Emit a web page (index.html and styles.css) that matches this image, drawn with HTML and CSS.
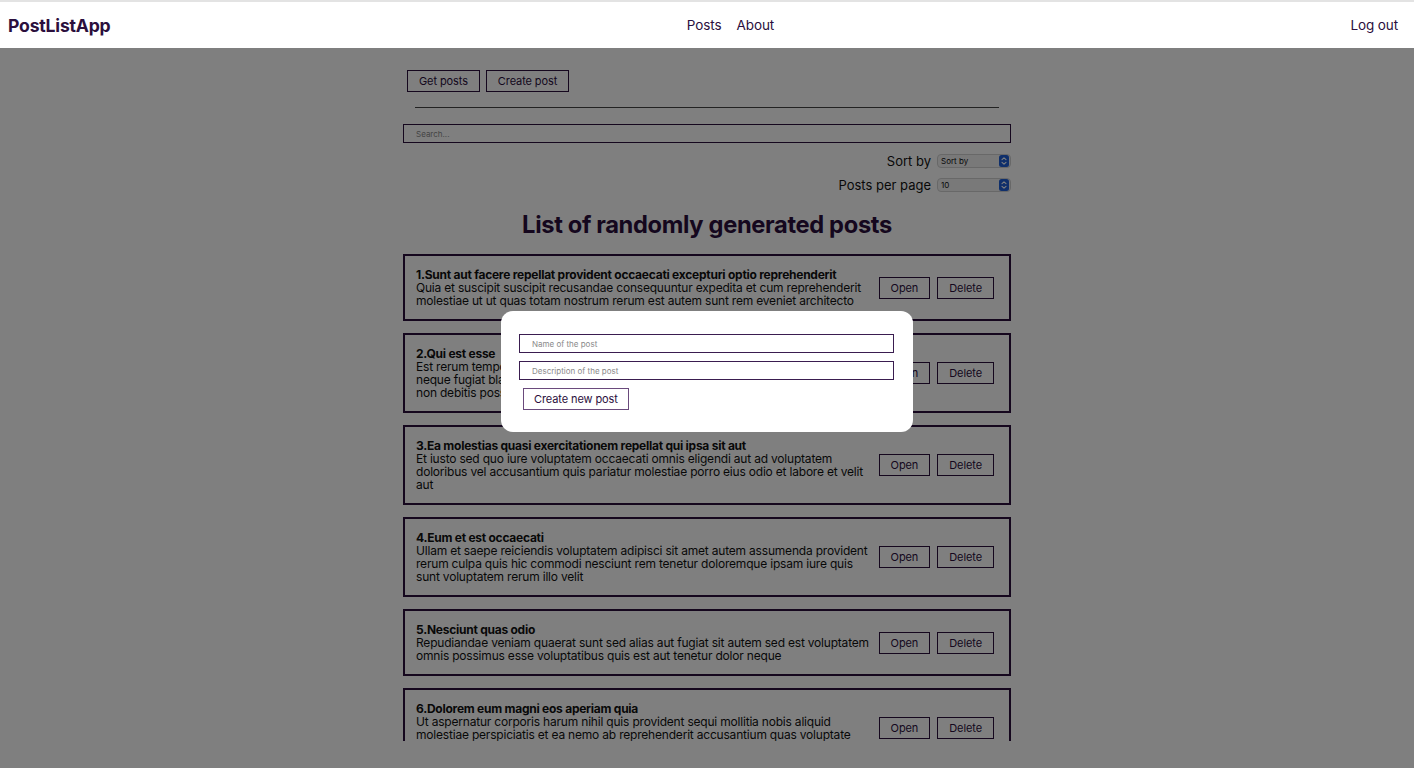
FILE: index.html
```html
<!DOCTYPE html>
<html lang="en">
<head>
<meta charset="utf-8">
<title>PostListApp</title>
<link rel="stylesheet" href="styles.css">
</head>
<body>
<header class="navbar">
  <div class="brand">PostListApp</div>
  <nav class="nav-links">
    <a class="nav-link" href="#">Posts</a>
    <a class="nav-link" href="#">About</a>
  </nav>
  <a class="nav-link logout" href="#">Log out</a>
</header>
<main class="page">
  <div class="container">
    <div class="actions">
      <button class="btn">Get posts</button>
      <button class="btn">Create post</button>
    </div>
    <hr class="divider">
    <input class="search" type="text" placeholder="Search...">
    <div class="filter-row">
      <span class="filter-label">Sort by</span>
      <div class="select-wrap">
        <select class="select"><option>Sort by</option></select>
        <svg class="select-icon" viewBox="0 0 10 12" width="10" height="12"><rect x="0" y="0" width="10" height="12" rx="2.5" fill="#1f5fd6"/><path d="M3 4.6 L5 2.8 L7 4.6 M3 7.4 L5 9.2 L7 7.4" stroke="#fff" stroke-width="1.1" fill="none" stroke-linecap="round" stroke-linejoin="round"/></svg>
      </div>
    </div>
    <div class="filter-row">
      <span class="filter-label">Posts per page</span>
      <div class="select-wrap">
        <select class="select"><option>10</option></select>
        <svg class="select-icon" viewBox="0 0 10 12" width="10" height="12"><rect x="0" y="0" width="10" height="12" rx="2.5" fill="#1f5fd6"/><path d="M3 4.6 L5 2.8 L7 4.6 M3 7.4 L5 9.2 L7 7.4" stroke="#fff" stroke-width="1.1" fill="none" stroke-linecap="round" stroke-linejoin="round"/></svg>
      </div>
    </div>
    <h1 class="list-title">List of randomly generated posts</h1>
    <div class="posts">
      <div class="post">
        <div class="post-content">
          <div class="post-title">1.Sunt aut facere repellat provident occaecati excepturi optio reprehenderit</div>
          <div class="post-body">Quia et suscipit suscipit recusandae consequuntur expedita et cum reprehenderit molestiae ut ut quas totam nostrum rerum est autem sunt rem eveniet architecto</div>
        </div>
        <div class="post-btns"><button class="btn btn-sm">Open</button><button class="btn btn-sm">Delete</button></div>
      </div>
      <div class="post">
        <div class="post-content">
          <div class="post-title">2.Qui est esse</div>
          <div class="post-body">Est rerum tempore vitae sequi sint nihil reprehenderit dolor beatae ea dolores neque fugiat blanditiis voluptate porro vel nihil molestiae ut reiciendis qui aperiam non debitis possimus qui neque nisi nulla</div>
        </div>
        <div class="post-btns"><button class="btn btn-sm">Open</button><button class="btn btn-sm">Delete</button></div>
      </div>
      <div class="post">
        <div class="post-content">
          <div class="post-title">3.Ea molestias quasi exercitationem repellat qui ipsa sit aut</div>
          <div class="post-body">Et iusto sed quo iure voluptatem occaecati omnis eligendi aut ad voluptatem doloribus vel accusantium quis pariatur molestiae porro eius odio et labore et velit aut</div>
        </div>
        <div class="post-btns"><button class="btn btn-sm">Open</button><button class="btn btn-sm">Delete</button></div>
      </div>
      <div class="post">
        <div class="post-content">
          <div class="post-title">4.Eum et est occaecati</div>
          <div class="post-body">Ullam et saepe reiciendis voluptatem adipisci sit amet autem assumenda provident rerum culpa quis hic commodi nesciunt rem tenetur doloremque ipsam iure quis sunt voluptatem rerum illo velit</div>
        </div>
        <div class="post-btns"><button class="btn btn-sm">Open</button><button class="btn btn-sm">Delete</button></div>
      </div>
      <div class="post">
        <div class="post-content">
          <div class="post-title">5.Nesciunt quas odio</div>
          <div class="post-body">Repudiandae veniam quaerat sunt sed alias aut fugiat sit autem sed est voluptatem omnis possimus esse voluptatibus quis est aut tenetur dolor neque</div>
        </div>
        <div class="post-btns"><button class="btn btn-sm">Open</button><button class="btn btn-sm">Delete</button></div>
      </div>
      <div class="post">
        <div class="post-content">
          <div class="post-title">6.Dolorem eum magni eos aperiam quia</div>
          <div class="post-body">Ut aspernatur corporis harum nihil quis provident sequi mollitia nobis aliquid molestiae perspiciatis et ea nemo ab reprehenderit accusantium quas voluptate dolores velit et doloremque molestiae</div>
        </div>
        <div class="post-btns"><button class="btn btn-sm">Open</button><button class="btn btn-sm">Delete</button></div>
      </div>
    </div>
  </div>
</main>
<div class="overlay"></div>
<div class="modal">
  <input class="modal-input" type="text" placeholder="Name of the post">
  <input class="modal-input" type="text" placeholder="Description of the post">
  <button class="btn modal-btn">Create new post</button>
</div>
</body>
</html>
```
FILE: styles.css
```css
* { box-sizing: border-box; }
html, body { margin: 0; padding: 0; }
body {
  font-family: Inter, "Noto Sans", "Liberation Sans", sans-serif;
  color: #2b0f3d;
  background: #ffffff;
  height: 768px;
  overflow: hidden;
}
.navbar {
  position: relative;
  z-index: 3;
  height: 48px;
  border-top: 2px solid #e3e3e3;
  background: #ffffff;
  display: flex;
  align-items: center;
  justify-content: space-between;
  padding: 0 16px 0 8px;
}
.brand {
  font-size: 17.6px;
  font-weight: 700;
  color: #2b0f3d;
  letter-spacing: -0.2px;
}
.nav-links {
  display: flex;
  gap: 15px;
}
.nav-link {
  font-size: 13.5px;
  color: #2b0f3d;
  text-decoration: none;
  letter-spacing: -0.1px;
}
.page {
  height: 693px;
  overflow: hidden;
}
.container {
  width: 608px;
  margin: 0 auto;
  padding-top: 22px;
}
.actions {
  display: flex;
  gap: 6px;
  padding-left: 4px;
}
.btn {
  font-family: inherit;
  font-size: 11px;
  letter-spacing: -0.1px;
  color: #2b0f3d;
  background: transparent;
  border: 1px solid #2b0f3d;
  height: 22px;
  padding: 0 11px;
  cursor: pointer;
}
.divider {
  margin: 15px 12px 16px;
  border: none;
  border-top: 1px solid #444;
  height: 0;
}
.search {
  display: block;
  width: 100%;
  height: 19px;
  border: 1px solid #2b0f3d;
  font-family: inherit;
  font-size: 8px;
  padding: 0 12px;
  background: #fff;
}
.search::placeholder { color: #8a8a8a; }
.filter-row {
  display: flex;
  justify-content: flex-end;
  align-items: center;
  gap: 6px;
  margin-top: 11px;
  height: 14px;
}
.filter-row + .filter-row { margin-top: 10px; }
.filter-label {
  font-size: 13px;
  color: #111;
}
.select-wrap {
  position: relative;
  width: 74px;
  height: 14px;
}
.select {
  display: block;
  appearance: none;
  -webkit-appearance: none;
  width: 100%;
  height: 14px;
  margin: 0;
  border: 1px solid #d0d0d0;
  border-radius: 4px;
  background: #f2f2f2;
  font-family: inherit;
  font-size: 8px;
  color: #111;
  padding: 0 3px;
  line-height: 12px;
}
.select-icon {
  position: absolute;
  right: 2px;
  top: 1px;
  width: 10px;
  height: 12px;
}
.list-title {
  margin: 18px 0 15px;
  text-align: center;
  font-size: 23.7px;
  font-weight: 700;
  color: #2b0f3d;
  letter-spacing: -0.35px;
  line-height: 29px;
}
.posts {
  display: flex;
  flex-direction: column;
  gap: 12px;
}
.post {
  border: 2px solid #2b0f3d;
  padding: 12px 15px 12px 11px;
  display: flex;
  align-items: center;
  gap: 6px;
}
.post-content {
  flex: 1;
  min-width: 0;
  color: #111;
  font-size: 12px;
  line-height: 13px;
  letter-spacing: -0.2px;
}
.post-title { font-weight: 700; letter-spacing: -0.25px; }
.post-btns {
  display: flex;
  gap: 7px;
  flex-shrink: 0;
}
.btn-sm { padding: 0 11px; }
.overlay {
  position: fixed;
  inset: 0;
  z-index: 2;
  background: rgba(0, 0, 0, 0.5);
}
.modal {
  position: fixed;
  z-index: 4;
  left: 501px;
  top: 311px;
  width: 412px;
  background: #fff;
  border-radius: 12px;
  padding: 23px 19px 22px 18px;
  display: flex;
  flex-direction: column;
  align-items: flex-start;
  gap: 8px;
}
.modal-input {
  width: 100%;
  height: 19px;
  border: 1px solid #3a1d50;
  font-family: inherit;
  font-size: 8px;
  padding: 0 12px;
}
.modal-input::placeholder { color: #8a8a8a; }
.modal-btn {
  margin-left: 4px;
  border-color: #6a4a7c;
  padding: 0 10px;
}
```
